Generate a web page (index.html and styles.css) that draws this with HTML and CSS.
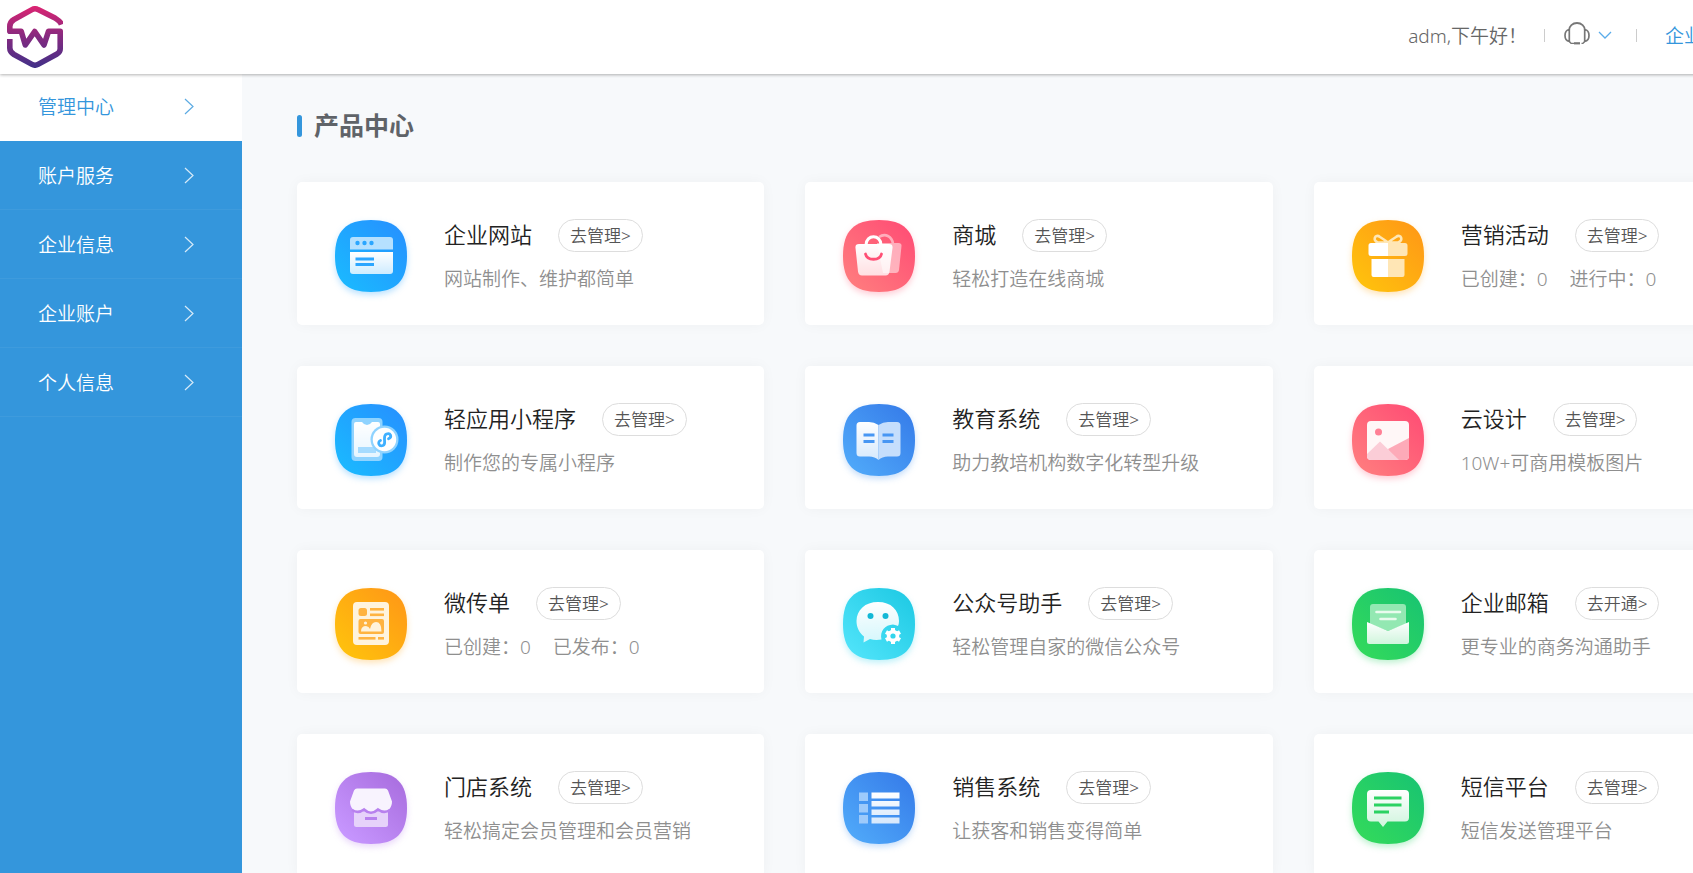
FILE: index.html
```html
<!DOCTYPE html>
<html lang="zh-CN">
<head>
    <meta charset="UTF-8">
    <meta name="viewport" content="width=device-width, initial-scale=1.0">
    <title>管理中心</title>
    <link rel="stylesheet" href="styles.css">
</head>
<body>
    <!-- shared gradients and shapes -->
    <svg class="defs" width="0" height="0" aria-hidden="true">
        <defs>
            <linearGradient id="blue" x1="0" y1="1" x2="1" y2="0"><stop offset="0.1" stop-color="#1bb8ff"/><stop offset="0.9" stop-color="#2593ff"/></linearGradient>
            <linearGradient id="pink" x1="0" y1="1" x2="1" y2="0"><stop offset="0.1" stop-color="#ff7b7e"/><stop offset="0.9" stop-color="#ff4f75"/></linearGradient>
            <linearGradient id="orange" x1="0" y1="1" x2="1" y2="0"><stop offset="0.1" stop-color="#ffc10d"/><stop offset="0.9" stop-color="#ff9a16"/></linearGradient>
            <linearGradient id="navy" x1="0" y1="1" x2="1" y2="0"><stop offset="0.1" stop-color="#4fa8f9"/><stop offset="0.9" stop-color="#377eea"/></linearGradient>
            <linearGradient id="cyan" x1="0" y1="1" x2="1" y2="0"><stop offset="0.1" stop-color="#4fe3f9"/><stop offset="0.9" stop-color="#21cbe5"/></linearGradient>
            <linearGradient id="green" x1="0" y1="1" x2="1" y2="0"><stop offset="0.1" stop-color="#32d95c"/><stop offset="0.9" stop-color="#1ac570"/></linearGradient>
            <linearGradient id="purple" x1="0" y1="1" x2="1" y2="0"><stop offset="0.1" stop-color="#c797ff"/><stop offset="0.9" stop-color="#aa6fe0"/></linearGradient>
            <linearGradient id="fade" x1="0" y1="0" x2="0" y2="1"><stop offset="0" stop-color="#fff"/><stop offset="1" stop-color="#fff" stop-opacity="0.78"/></linearGradient>
            <linearGradient id="logo-fill" gradientUnits="userSpaceOnUse" x1="0" y1="0" x2="0" y2="62"><stop offset="0" stop-color="#dc2472"/><stop offset="0.5" stop-color="#842a80"/><stop offset="1" stop-color="#413088"/></linearGradient>
            <path id="tile" d="M36 0C61 0 72 11 72 36S61 72 36 72 0 61 0 36 11 0 36 0Z"/>
            <path id="arrow" d="M1 1l8 7.500-8 7.500" fill="none" stroke="currentColor" stroke-width="1.200"/>
        </defs>
    </svg>

    <header class="header">
        <a class="logo" href="#" aria-label="首页">
            <svg width="56" height="62" viewBox="0 0 56 62" fill="none" stroke="url(#logo-fill)" stroke-width="5.600" stroke-linejoin="round">
                <path d="M54.500 18.500C53.500 15.500 52 14.500 48 12L31 3.600Q28 2 25 3.600L7 13.500Q2.800 16 2.800 20.500V25.300H14.200L18.300 39 27.700 25.500 37 39 41.500 25.300H53.200V43Q53.200 46 50 48L31 58.400Q28 60 25 58.400L7 48.500Q2.800 46 2.800 42V33"/>
            </svg>
        </a>
        <div class="user-bar">
            <span class="greeting">adm,下午好！</span>
            <button class="service" type="button" aria-label="客服">
                <svg class="headset" width="26" height="23" viewBox="0 0 26 23" fill="none" stroke="#777">
                    <path d="M5 9V8.500A8 7.500 0 0 1 21 8.500V9" stroke-width="1.800"/>
                    <path d="M5.300 7.500C2.500 8 1 10 1 13.500S2.500 19 5.300 19.500ZM20.700 7.500C23.500 8 25 10 25 13.500S23.500 19 20.700 19.500Z" stroke-width="1.700"/>
                    <path d="M5.300 19.500L7 21.300H10M20.700 19.500L19 21.300H17.500" stroke-width="1.300"/>
                    <path d="M10 21.300H16" stroke-width="2.200"/>
                </svg>
                <svg width="14" height="9" viewBox="0 0 14 9"><path d="M1 1l6 6 6-6" fill="none" stroke="#5aacea" stroke-width="1.300"/></svg>
            </button>
            <a class="company" href="#">企业</a>
        </div>
    </header>

    <div class="layout">
        <nav class="sidebar">
            <a class="nav-item active" href="#">管理中心<svg width="10" height="17"><use href="#arrow"/></svg></a>
            <a class="nav-item" href="#">账户服务<svg width="10" height="17"><use href="#arrow"/></svg></a>
            <a class="nav-item" href="#">企业信息<svg width="10" height="17"><use href="#arrow"/></svg></a>
            <a class="nav-item" href="#">企业账户<svg width="10" height="17"><use href="#arrow"/></svg></a>
            <a class="nav-item" href="#">个人信息<svg width="10" height="17"><use href="#arrow"/></svg></a>
        </nav>

        <main class="main">
            <h1 class="section-title">产品中心</h1>
            <div class="products">
                <section class="card">
                    <svg class="icon icon-blue" viewBox="0 0 72 72">
                        <use href="#tile" fill="url(#blue)"/>
                        <path d="M15 29.500V20a3 3 0 0 1 3-3H55a3 3 0 0 1 3 3V29.500Z" fill="#b5e0ff"/>
                        <path d="M15 32H58V51a3 3 0 0 1-3 3H18a3 3 0 0 1-3-3Z" fill="url(#fade)"/>
                        <g fill="#2ba6ff"><circle cx="22.500" cy="23" r="2.200"/><circle cx="29.500" cy="23" r="2.200"/><circle cx="36.500" cy="23" r="2.200"/><rect x="20.500" y="37.500" width="18.500" height="3"/><rect x="20.500" y="43" width="18.500" height="3"/></g>
                    </svg>
                    <div class="info">
                        <div class="head"><h2>企业网站</h2><button type="button">去管理&gt;</button></div>
                        <p>网站制作、维护都简单</p>
                    </div>
                </section>

                <section class="card">
                    <svg class="icon icon-pink" viewBox="0 0 72 72">
                        <use href="#tile" fill="url(#pink)"/>
                        <g opacity="0.5"><path d="M34 23H55.500Q58.800 23 58.500 26L56 50Q55.500 53 52.500 53H40Z" fill="#fff"/><path d="M36 17C42 13 49 16 50 24" fill="none" stroke="#fff" stroke-width="2.600"/></g>
                        <path d="M16 24H46Q50 24 49.500 28L46.500 51.500Q46 55.500 42.500 55.500H19Q15.500 55.500 15 51.500L12.500 28Q12 24 16 24Z" fill="url(#fade)"/>
                        <path d="M23 25C23 14 38 14 38 25" fill="none" stroke="#fff" stroke-width="3"/>
                        <path d="M22.500 34C24 41 37 41 38.500 34" fill="none" stroke="#ff4f75" stroke-width="2.800" stroke-linecap="round"/>
                    </svg>
                    <div class="info">
                        <div class="head"><h2>商城</h2><button type="button">去管理&gt;</button></div>
                        <p>轻松打造在线商城</p>
                    </div>
                </section>

                <section class="card">
                    <svg class="icon icon-orange" viewBox="0 0 72 72">
                        <use href="#tile" fill="url(#orange)"/>
                        <path d="M36 22.500H26C20 21 23 13 28 17Q32 19.500 36 22.500H46C52 21 49 13 44 17Q40 19.500 36 22.500" fill="none" stroke="#ffe7b5" stroke-width="2.600" stroke-linejoin="round"/>
                        <path d="M36 23H19Q16.500 23 16.500 25.500V33.500Q16.500 36 19 36H36ZM36 39H19.500V55Q19.500 57 21.500 57H36Z" fill="#fff"/>
                        <path d="M36 23H53Q55.500 23 55.500 25.500V33.500Q55.500 36 53 36H36ZM36 39H52.500V55Q52.500 57 50.500 57H36Z" fill="#ffe6b5"/>
                    </svg>
                    <div class="info">
                        <div class="head"><h2>营销活动</h2><button type="button">去管理&gt;</button></div>
                        <p><span>已创建：0</span><span>进行中：0</span></p>
                    </div>
                </section>

                <section class="card">
                    <svg class="icon icon-blue" viewBox="0 0 72 72">
                        <use href="#tile" fill="url(#blue)"/>
                        <rect x="16.500" y="14" width="31" height="43" rx="4" fill="#8fd3ff"/>
                        <path d="M21 18H27Q29 21 32 21T37 18H43Q45 18 45 20V50Q45 53 42 53H22Q19 53 19 50V20Q19 18 21 18Z" fill="url(#fade)"/>
                        <rect x="23" y="43" width="18" height="6" fill="#a5dbff"/>
                        <circle cx="49.500" cy="35.500" r="14" fill="#8fd3ff"/>
                        <circle cx="49.500" cy="35.500" r="11.700" fill="#fff"/>
                        <path d="M45.500 36.500C42 38 44 43 48 41.500 50.500 40.500 49.500 37 49.500 35.500S49 31 51.500 30C55.500 28.500 57.500 33 53.500 34.800" fill="none" stroke="#3fb0ff" stroke-width="2.800" stroke-linecap="round"/>
                    </svg>
                    <div class="info">
                        <div class="head"><h2>轻应用小程序</h2><button type="button">去管理&gt;</button></div>
                        <p>制作您的专属小程序</p>
                    </div>
                </section>

                <section class="card">
                    <svg class="icon icon-navy" viewBox="0 0 72 72">
                        <use href="#tile" fill="url(#navy)"/>
                        <path d="M35.500 21Q31 18 26 18H17Q13.500 18 13.500 21.500V49Q13.500 52.500 17 52.500H26Q32 52.500 35.500 56Z" fill="url(#fade)"/>
                        <path d="M35.500 21Q40 18 45 18H54Q57.500 18 57.500 21.500V49Q57.500 52.500 54 52.500H45Q39 52.500 35.500 56Z" fill="#c5defc"/>
                        <path d="M20.500 31H31.500M20.500 37.500H31.500M39.500 31H50.500M39.500 37.500H50.500" stroke="#4796f3" stroke-width="3"/>
                    </svg>
                    <div class="info">
                        <div class="head"><h2>教育系统</h2><button type="button">去管理&gt;</button></div>
                        <p>助力教培机构数字化转型升级</p>
                    </div>
                </section>

                <section class="card">
                    <svg class="icon icon-pink" viewBox="0 0 72 72">
                        <use href="#tile" fill="url(#pink)"/>
                        <rect x="15" y="17" width="42" height="39" rx="4" fill="#fff7f7"/>
                        <path d="M36 45L57 34V52a4 4 0 0 1-4 4H42Z" fill="#fdaab8"/>
                        <path d="M15 50L28 37.500 47 56H19a4 4 0 0 1-4-4Z" fill="#fbcdd7"/>
                        <circle cx="26.500" cy="28" r="3.500" fill="#ff8095"/>
                    </svg>
                    <div class="info">
                        <div class="head"><h2>云设计</h2><button type="button">去管理&gt;</button></div>
                        <p>10W+可商用模板图片</p>
                    </div>
                </section>

                <section class="card">
                    <svg class="icon icon-orange" viewBox="0 0 72 72">
                        <use href="#tile" fill="url(#orange)"/>
                        <rect x="18" y="14" width="36" height="43" rx="4" fill="#fff3dc"/>
                        <g fill="#ffb340"><rect x="23.500" y="20" width="8.500" height="8" rx="2.500"/><rect x="35" y="20" width="14" height="2.600"/><rect x="35" y="25.500" width="14" height="2.600"/><rect x="23.500" y="31" width="25.500" height="15" rx="2"/><rect x="23.500" y="49" width="17" height="2.600"/><rect x="43" y="49" width="6" height="2.600"/></g>
                        <path d="M26 43.500Q26 38 31 38Q34 38.500 35 41Q36.500 34 41 34Q46.500 34 46.500 43.500Z" fill="#fff3dc"/>
                        <circle cx="30.500" cy="35" r="1.600" fill="#fff3dc"/>
                    </svg>
                    <div class="info">
                        <div class="head"><h2>微传单</h2><button type="button">去管理&gt;</button></div>
                        <p><span>已创建：0</span><span>已发布：0</span></p>
                    </div>
                </section>

                <section class="card">
                    <svg class="icon icon-cyan" viewBox="0 0 72 72">
                        <use href="#tile" fill="url(#cyan)"/>
                        <path d="M35 14C22 14 13.500 22 13.500 33 13.500 39 16 44.500 21 48.500L20.500 54.500 27 51Q32 52.500 38.500 51.500C36.500 43 42 37 50 36.500Q53.500 37 55 38Q56 36 56 33C56 22 48 14 35 14Z" fill="url(#fade)"/>
                        <circle cx="27.500" cy="28" r="3" fill="#12b8d6"/><circle cx="42.500" cy="28" r="3" fill="#12b8d6"/>
                        <path d="M50 40V56M43 44L57 52M57 44L43 52" stroke="#fff" stroke-width="4"/>
                        <circle cx="50" cy="48" r="4.500" fill="none" stroke="#fff" stroke-width="3.500"/>
                        <circle cx="50" cy="48" r="2.600" fill="#32d5ec"/>
                    </svg>
                    <div class="info">
                        <div class="head"><h2>公众号助手</h2><button type="button">去管理&gt;</button></div>
                        <p>轻松管理自家的微信公众号</p>
                    </div>
                </section>

                <section class="card">
                    <svg class="icon icon-green" viewBox="0 0 72 72">
                        <use href="#tile" fill="url(#green)"/>
                        <path d="M18 36V19Q18 16 21 16H51Q54 16 54 19V36L36 43Z" fill="#93e8b2"/>
                        <path d="M24.500 24H48M28.500 31H43.500" stroke="#e9fbee" stroke-width="2.600" stroke-linecap="round"/>
                        <path d="M15 34L36 43 57 34V53.500Q57 56 54.500 56H17.500Q15 56 15 53.500Z" fill="url(#fade)"/>
                    </svg>
                    <div class="info">
                        <div class="head"><h2>企业邮箱</h2><button type="button">去开通&gt;</button></div>
                        <p>更专业的商务沟通助手</p>
                    </div>
                </section>

                <section class="card">
                    <svg class="icon icon-purple" viewBox="0 0 72 72">
                        <use href="#tile" fill="url(#purple)"/>
                        <path d="M19 36H53V52.500Q53 55 50.500 55H21.500Q19 55 19 52.500Z" fill="#e6d2fa"/>
                        <path d="M22 16.500H50Q52 16.500 53 18.500L57 29.500C57 38 50 42 43 37.500Q36 44 29 37.500C22 42 15 38 15 29.500L19 18.500Q20 16.500 22 16.500Z" fill="#f8f3fe"/>
                        <path d="M17 38Q23 42 29 37.500Q36 44 43 37.500Q49 42 55 38" fill="none" stroke="#b881ee" stroke-width="2.600"/>
                        <path d="M30 46.500H42" stroke="#b881ee" stroke-width="3"/>
                    </svg>
                    <div class="info">
                        <div class="head"><h2>门店系统</h2><button type="button">去管理&gt;</button></div>
                        <p>轻松搞定会员管理和会员营销</p>
                    </div>
                </section>

                <section class="card">
                    <svg class="icon icon-navy" viewBox="0 0 72 72">
                        <use href="#tile" fill="url(#navy)"/>
                        <path d="M16 20.500h9v8.500h-9ZM16 32h9v8.500h-9ZM16 43h9v8.500h-9Z" fill="#9dcafb"/>
                        <path d="M28.500 20.500h28v6h-28ZM28.500 29h28v5.500h-28ZM28.500 37.500h28v5.500h-28ZM28.500 45.500h28v6h-28Z" fill="url(#fade)"/>
                    </svg>
                    <div class="info">
                        <div class="head"><h2>销售系统</h2><button type="button">去管理&gt;</button></div>
                        <p>让获客和销售变得简单</p>
                    </div>
                </section>

                <section class="card">
                    <svg class="icon icon-green" viewBox="0 0 72 72">
                        <use href="#tile" fill="url(#green)"/>
                        <path d="M19 18H53Q57 18 57 22V45.500Q57 49.500 53 49.500H35.500L31 55 26.500 49.500H19Q15 49.500 15 45.500V22Q15 18 19 18Z" fill="url(#fade)"/>
                        <path d="M22 26H49.500M22 33H49.500M22 40H37" stroke="#2bd262" stroke-width="2.800"/>
                    </svg>
                    <div class="info">
                        <div class="head"><h2>短信平台</h2><button type="button">去管理&gt;</button></div>
                        <p>短信发送管理平台</p>
                    </div>
                </section>
            </div>
        </main>
    </div>
</body>
</html>
```
FILE: styles.css
```css
* {
    box-sizing: border-box;
}
html {
    overflow: hidden;
}
body {
    min-width: 1836px;
    min-height: 100vh;
    margin: 0;
    display: flex;
    flex-direction: column;
    background-color: #f7f9fb;
    color: #333;
    font-family: "Noto Sans", "Noto Sans CJK SC", sans-serif;
    font-size: 19px;
    font-weight: 350;
}
a {
    color: inherit;
    text-decoration: none;
}
button {
    font: inherit;
    cursor: pointer;
}
.defs {
    position: absolute;
}

/* header */
.header {
    position: relative;
    z-index: 1;
    display: flex;
    align-items: center;
    justify-content: space-between;
    height: 74px;
    margin-bottom: -2px;
    padding: 0 133px 0 7px;
    background: #fff;
    box-shadow: 0 1px 3px rgba(0, 0, 0, 0.3);
}
.logo svg {
    display: block;
}
.user-bar {
    display: flex;
    align-items: center;
    padding-bottom: 3px;
    line-height: 26px;
}
.greeting {
    color: #666;
}
.service {
    display: flex;
    align-items: center;
    gap: 8px;
    height: 13px;
    margin-left: 17px;
    padding: 0 24px 0 19px;
    border: solid #ccc;
    border-width: 0 1px;
    background: none;
}
.headset {
    margin-bottom: 5px;
}
.company {
    margin-left: 28px;
    color: #3496dc;
}

/* sidebar */
.layout {
    display: flex;
    flex: 1;
}
.sidebar {
    flex: 0 0 242px;
    background: #3496dc;
    color: #fff;
}
.nav-item {
    display: flex;
    align-items: center;
    justify-content: space-between;
    height: 69px;
    padding: 0 48px 0 38px;
    border-bottom: 1px solid #3e9bdd;
}
.nav-item svg {
    opacity: 0.8;
}
.nav-item.active {
    border-bottom-color: #fff;
    background: #fff;
    color: #3496dc;
}

/* products */
.main {
    flex: 1;
    padding: 36px 55px 41px;
}
.section-title {
    display: flex;
    align-items: center;
    gap: 12px;
    margin: 0 0 39px;
    color: #5f6368;
    font-size: 25px;
    line-height: 35px;
}
.section-title::before {
    content: "";
    width: 5px;
    height: 22px;
    border-radius: 3px;
    background: #3496dc;
}
.products {
    display: grid;
    grid-template-columns: repeat(3, 1fr);
    gap: 41px;
}
.card {
    display: flex;
    align-items: flex-start;
    gap: 37px;
    height: 143px;
    padding: 37px 38px;
    border-radius: 5px;
    background: #fff;
    box-shadow: 0 0 14px rgba(0, 0, 0, 0.04);
}
.icon {
    flex: none;
    width: 72px;
    height: 72px;
    margin-top: 1px;
}
.icon-blue {
    filter: drop-shadow(0 3px 3px rgba(30, 160, 255, 0.3));
}
.icon-pink {
    filter: drop-shadow(0 3px 3px rgba(255, 90, 120, 0.3));
}
.icon-orange {
    filter: drop-shadow(0 3px 3px rgba(255, 165, 20, 0.3));
}
.icon-navy {
    filter: drop-shadow(0 3px 3px rgba(65, 145, 240, 0.3));
}
.icon-cyan {
    filter: drop-shadow(0 3px 3px rgba(45, 210, 235, 0.3));
}
.icon-green {
    filter: drop-shadow(0 3px 3px rgba(40, 210, 100, 0.3));
}
.icon-purple {
    filter: drop-shadow(0 3px 3px rgba(185, 130, 240, 0.3));
}
.head {
    display: flex;
    align-items: flex-start;
    gap: 26px;
    height: 33px;
}
.head h2 {
    margin: 0;
    color: #222;
    font-size: 22px;
    font-weight: 350;
    line-height: 30px;
}
.head button {
    height: 33px;
    padding: 0 11px;
    border: 1px solid #ddd;
    border-radius: 17px;
    background: #fff;
    color: #555;
    font-size: 17px;
    line-height: 31px;
}
.info p {
    display: flex;
    gap: 22px;
    margin: 13px 0 0;
    color: #8f8f8f;
    line-height: 28px;
}
```
